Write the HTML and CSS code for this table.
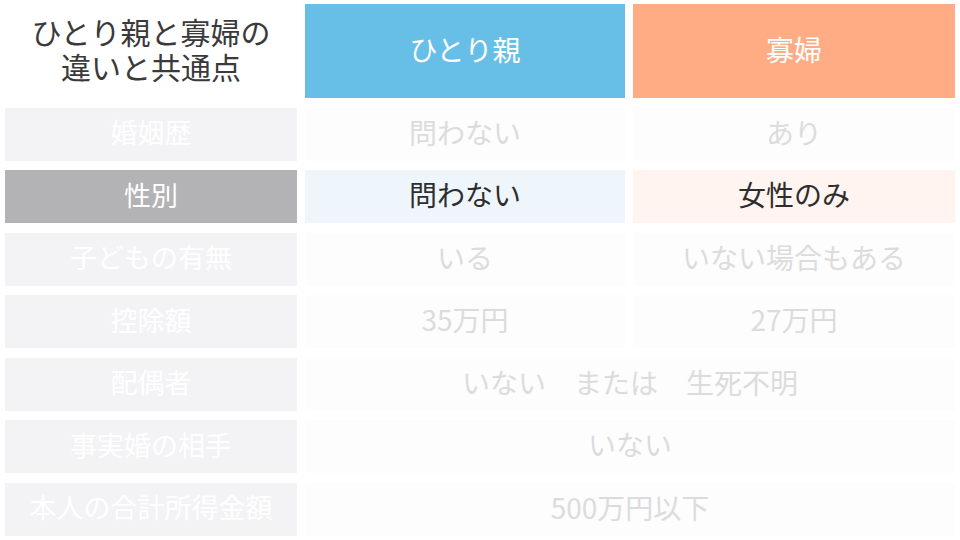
FILE: index.html
```html
<!DOCTYPE html>
<html lang="ja">
<head>
<meta charset="utf-8">
<link rel="stylesheet" href="styles.css">
</head>
<body>
<div class="table">
  <div class="title"><span class="line">ひとり親と寡婦の</span><span class="line">違いと共通点</span></div>
  <div class="head head-blue">ひとり親</div>
  <div class="head head-orange">寡婦</div>

  <div class="label faded">婚姻歴</div>
  <div class="cell faded-cell">問わない</div>
  <div class="cell faded-cell">あり</div>

  <div class="label active">性別</div>
  <div class="cell blue">問わない</div>
  <div class="cell orange">女性のみ</div>

  <div class="label faded">子どもの有無</div>
  <div class="cell faded-cell">いる</div>
  <div class="cell faded-cell">いない場合もある</div>

  <div class="label faded">控除額</div>
  <div class="cell faded-cell">35万円</div>
  <div class="cell faded-cell">27万円</div>

  <div class="label faded">配偶者</div>
  <div class="cell faded-cell span">いない　または　生死不明</div>

  <div class="label faded">事実婚の相手</div>
  <div class="cell faded-cell span">いない</div>

  <div class="label faded">本人の合計所得金額</div>
  <div class="cell faded-cell span">500万円以下</div>
</div>
</body>
</html>
```
FILE: styles.css
```css
html, body {
  margin: 0;
  padding: 0;
  background: #ffffff;
}
body {
  font-family: "Noto Sans CJK JP", "Noto Sans", sans-serif;
  width: 960px;
  height: 540px;
  overflow: hidden;
}
.table {
  display: grid;
  grid-template-columns: 292px 320px 322px;
  grid-template-rows: 94px repeat(7, 53px);
  column-gap: 8px;
  row-gap: 9.5px;
  padding: 4px 5px 0 5px;
}
.title,
.head,
.label,
.cell {
  display: flex;
  align-items: center;
  justify-content: center;
  text-align: center;
  padding-bottom: 5px;
  box-sizing: border-box;
}
.title {
  flex-direction: column;
  font-size: 30px;
  color: #3a3a3a;
}
.title .line {
  display: block;
  height: 35px;
  line-height: 35px;
  white-space: nowrap;
}
.head {
  font-size: 28px;
  color: #ffffff;
}
.head-blue {
  background: #67bee6;
}
.head-orange {
  background: #ffac84;
}
.label {
  font-size: 27px;
  color: #ffffff;
  white-space: nowrap;
}
.label.faded {
  background: #f3f2f4;
}
.label.active {
  background: #b3b2b5;
}
.cell {
  font-size: 28px;
}
.faded-cell {
  background: #fdfdfe;
  color: #dcdcdd;
}
.blue {
  background: #eef6fb;
  color: #2e2e2e;
}
.orange {
  background: #fff4ef;
  color: #2e2e2e;
}
.span {
  grid-column: 2 / 4;
}
```
